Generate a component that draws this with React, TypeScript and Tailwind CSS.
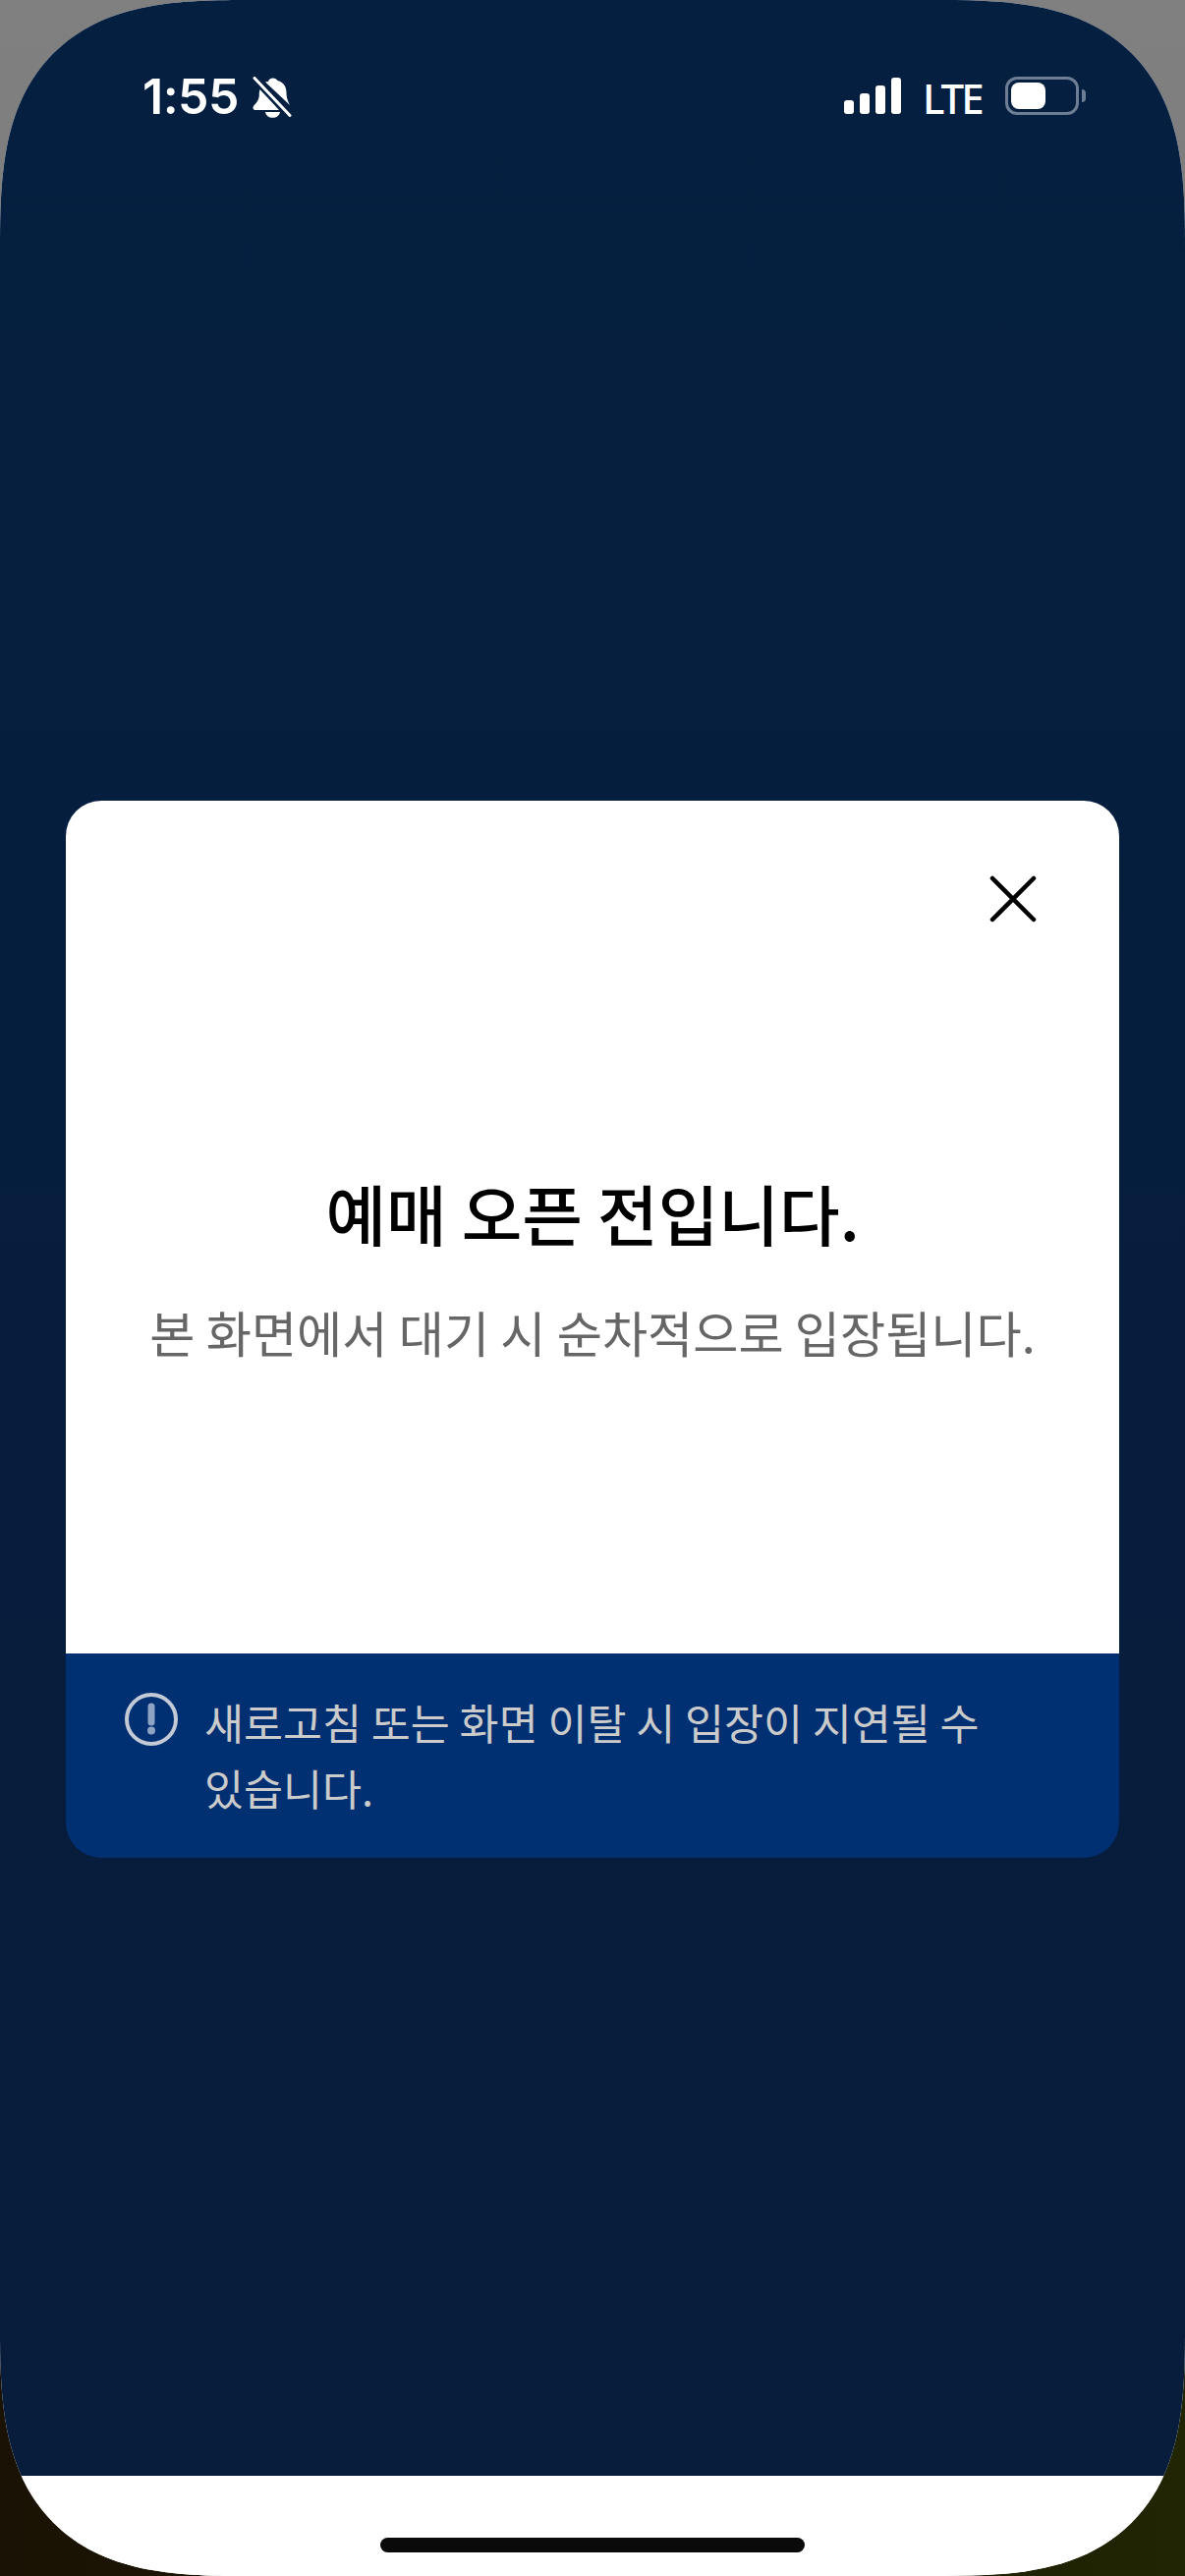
export default function App() {
  const kr = "font-['Noto_Sans_CJK_KR','Noto_Sans',sans-serif]";
  return (
    <div className="w-[1206px] h-[2622px] overflow-hidden bg-[linear-gradient(to_bottom,#808080_0,#7c7c7c_400px,transparent_400px),linear-gradient(to_right,#1a1204,#212503)]">
      <div className="w-full h-full rounded-[250px] [corner-shape:superellipse(1.5)] overflow-hidden flex flex-col bg-white">
        <div className="flex-1 flex flex-col bg-linear-to-b from-[#051f40] to-[#081c3b]">
          <div className="h-[198px] pt-[74px] pl-[145px] pr-[101px] flex justify-between items-start">
            <div className="flex items-center h-[48px] gap-[14px]">
              <span className="font-['Inter',sans-serif] font-semibold text-[50px] leading-none text-white tracking-[-0.5px]">1:55</span>
              <svg width="40" height="42" viewBox="0 0 40 42" className="text-white mt-[1px]">
                <path d="M16 5c.5-4 7-5 9.500-1 6 1.500 9 6.500 9 12.500 0 5 1.500 9 3.500 12.500L13 5.500z" fill="currentColor" />
                <path d="M8 12c-1 2-1.200 4-1.200 6.500C6.800 24 3.500 27 1 30c-1 1.500-.5 4 2 4h24z" fill="currentColor" />
                <path d="M13 36h15c-.5 3.500-3.500 5.800-7.500 5.800S13.500 39.500 13 36z" fill="currentColor" />
                <path d="M5 0l36 38" stroke="#051f40" strokeWidth="3" />
                <path d="M1 4l36 38" stroke="#051f40" strokeWidth="3" />
                <path d="M2 1.500l36 38" stroke="currentColor" strokeWidth="3" strokeLinecap="round" />
              </svg>
            </div>
            <div className="flex items-start">
              <div className="flex items-end gap-[6px] h-[37px] mt-[5px]">
                <div className="w-[10px] h-[14px] rounded-[3px] bg-white" />
                <div className="w-[10px] h-[21px] rounded-[3px] bg-white" />
                <div className="w-[10px] h-[29px] rounded-[3px] bg-white" />
                <div className="w-[10px] h-[37px] rounded-[3px] bg-white" />
              </div>
              <span className="ml-[22px] mt-[2px] font-['Noto_Sans',sans-serif] font-medium text-[42px] leading-[48px] text-white w-[60px] tracking-[-3px]">LTE</span>
              <div className="ml-[24px] mt-[4px] flex items-center">
                <div className="w-[75px] h-[39px] rounded-[12px] border-[3px] border-[#6d7d94] p-[3px]">
                  <div className="w-[35px] h-full rounded-[8px] bg-white" />
                </div>
                <div className="ml-[3px] w-[4px] h-[13px] rounded-r-full bg-[#6d7d94]" />
              </div>
            </div>
          </div>
          <div className="mt-[617px] mx-[67px] rounded-[36px] overflow-hidden flex flex-col">
            <div className="h-[868px] bg-white flex flex-col items-center">
              <div className="self-end mt-[76px] mr-[84px]">
                <svg width="48" height="48" viewBox="0 0 48 48" fill="none" stroke="#000" strokeWidth="4.500" strokeLinecap="round">
                  <path d="M3 3l42 42M45 3L3 45" />
                </svg>
              </div>
              <h1 className={`${kr} mt-[250px] text-[67px] leading-[90px] font-medium text-black`}>예매 오픈 전입니다.</h1>
              <p className={`${kr} mt-[41px] text-[50.200px] leading-[70px] text-[#666666]`}>본 화면에서 대기 시 순차적으로 입장됩니다.</p>
            </div>
            <div className="h-[208px] bg-[#002f72] pl-[60px] pt-[36px] flex items-start gap-[27px]">
              <svg width="54" height="54" viewBox="0 0 54 54" fill="none" className="mt-[4px] shrink-0 blur-[0.5px]">
                <circle cx="27" cy="27" r="25" stroke="#c3cad6" strokeWidth="4" />
                <path d="M27 14v16" stroke="#8fa3c4" strokeWidth="7" strokeLinecap="round" />
                <circle cx="27" cy="38.500" r="4" fill="#8fa3c4" />
              </svg>
              <p className={`${kr} w-[800px] text-[43.500px] leading-[67px] text-[#cbcbcb]`}>새로고침 또는 화면 이탈 시 입장이 지연될 수 있습니다.</p>
            </div>
          </div>
        </div>
        <div className="h-[102px] shrink-0 bg-white flex flex-col items-center pt-[63px]">
          <div className="w-[432px] h-[15px] rounded-full bg-[#0a0a0a]" />
        </div>
      </div>
    </div>
  );
}
